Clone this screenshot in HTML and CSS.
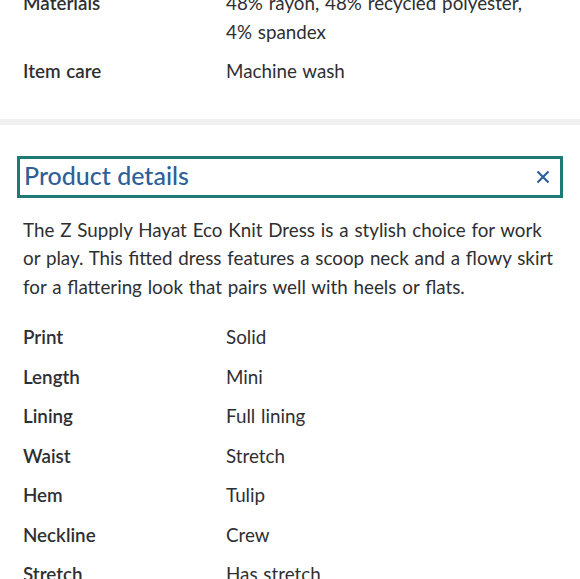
FILE: index.html
```html
<!DOCTYPE html>
<html lang="en">
<head>
<meta charset="utf-8">
<title>Product details</title>
<link rel="stylesheet" href="styles.css">
</head>
<body>
<section class="specs specs-top">
  <dl class="spec-list">
    <div class="spec-row"><dt>Materials</dt><dd>48% rayon, 48% recycled polyester, 4% spandex</dd></div>
    <div class="spec-row"><dt>Item care</dt><dd>Machine wash</dd></div>
  </dl>
</section>
<div class="band"></div>
<section class="details">
  <button class="details-head" type="button">
    <span class="details-title">Product details</span>
    <svg class="close" width="16" height="16" viewBox="0 0 16 16" aria-hidden="true"><path d="M2.5 2.5 L13.5 13.5 M13.5 2.5 L2.5 13.5" stroke="#2e5f98" stroke-width="2.2" stroke-linecap="butt" fill="none"/></svg>
  </button>
  <p class="desc">The Z Supply Hayat Eco Knit Dress is a stylish choice for work or play. This fitted dress features a scoop neck and a flowy skirt for a flattering look that pairs well with heels or flats.</p>
  <dl class="spec-list">
    <div class="spec-row"><dt>Print</dt><dd>Solid</dd></div>
    <div class="spec-row"><dt>Length</dt><dd>Mini</dd></div>
    <div class="spec-row"><dt>Lining</dt><dd>Full lining</dd></div>
    <div class="spec-row"><dt>Waist</dt><dd>Stretch</dd></div>
    <div class="spec-row"><dt>Hem</dt><dd>Tulip</dd></div>
    <div class="spec-row"><dt>Neckline</dt><dd>Crew</dd></div>
    <div class="spec-row"><dt>Stretch</dt><dd>Has stretch</dd></div>
  </dl>
</section>
</body>
</html>
```
FILE: styles.css
```css
html, body {
  margin: 0;
  padding: 0;
  background: #fff;
  overflow: hidden;
}
body {
  font-family: Lato, "Open Sans", sans-serif;
  color: #2e2f32;
  font-size: 18.8px;
  line-height: 28.5px;
  word-spacing: 1px;
}
.specs-top {
  margin-top: -11px;
  padding: 0 23px 33px;
}
.spec-list {
  margin: 0;
  display: flex;
  flex-direction: column;
  gap: 11px;
}
.spec-row {
  display: grid;
  grid-template-columns: 203px 1fr;
}
.spec-row dt {
  font-weight: 600;
  color: #2e2f32;
}
.spec-row dd {
  margin: 0;
}
.specs-top .spec-row dd {
  padding-right: 30px;
}
.band {
  height: 6px;
  background: #f1f1f2;
}
.details {
  padding: 31px 17px 0 23px;
}
.details-head {
  margin: 0 0 0 -6px;
  width: 546px;
  height: 42px;
  box-sizing: border-box;
  border: 3px solid #1f7a77;
  background: #fff;
  display: flex;
  align-items: center;
  justify-content: space-between;
  padding: 0 9px 0 4px;
  font: inherit;
  cursor: pointer;
}
.details-title {
  font-size: 25px;
  font-weight: 500;
  color: #2e5f98;
  line-height: 30px;
  margin-top: -3px;
}
.close {
  display: block;
}
.desc {
  margin: 18px 0 22px;
}
```
